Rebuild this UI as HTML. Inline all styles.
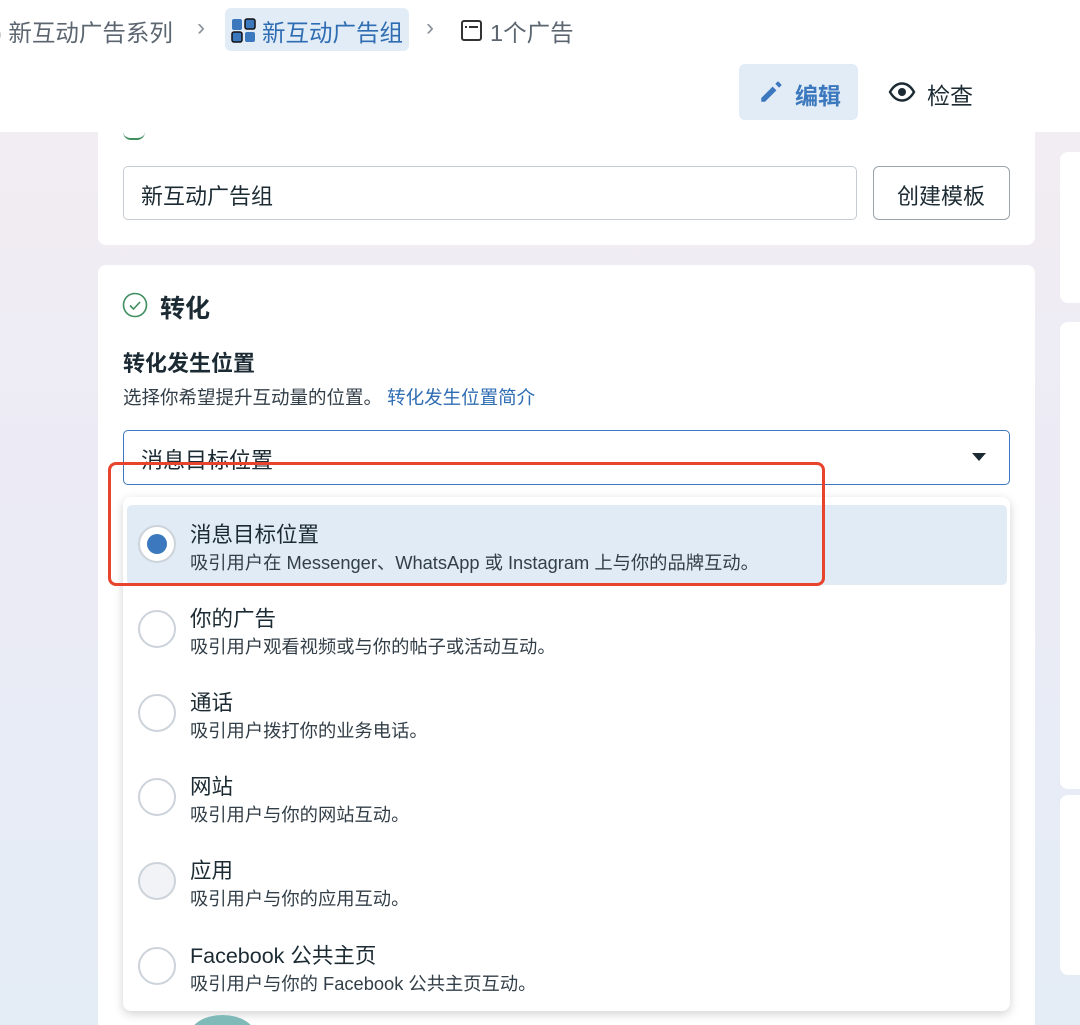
<!DOCTYPE html>
<html><head><meta charset="utf-8"><style>
*{margin:0;padding:0;box-sizing:border-box}
html{width:1080px;height:1025px;overflow:hidden;background:#e4ecf6}
body{width:1080px;height:1025px;overflow:hidden;position:relative;font-family:"Liberation Sans","Noto Sans CJK SC",sans-serif;color:#1c2b33;background:linear-gradient(180deg,#f4eef0 0%,#ecebf5 45%,#e4ecf6 100%)}
.a{position:absolute}
.top{left:0;top:0;width:1080px;height:132px;background:#fff}
.card{background:#fff;border-radius:8px}
.t{position:absolute;white-space:nowrap}
.radio{position:absolute;left:138px;width:38px;height:38px;border-radius:50%;border:2px solid #ccd3da;background:#fff}
.ti{font-size:21.5px}
.su{font-size:18.3px;color:#333f48}
</style></head><body>
<div class="a top"></div>
<div class="t" style="left:-6px;top:14px;font-size:23.5px;color:#5c6670">) 新互动广告系列</div>
<div class="t" style="left:197px;top:14px;font-size:24px;color:#8a939b">›</div>
<div class="a" style="left:225px;top:8px;width:184px;height:43px;background:#e1ecf7;border-radius:6px"></div>
<svg class="a" style="left:231px;top:18px" width="26" height="26" viewBox="0 0 26 26"><rect x="1" y="1" width="10" height="11" rx="2" fill="#3b78be"/><rect x="14" y="1" width="10" height="10" rx="2" fill="#3b78be" stroke="#111" stroke-width="1.5"/><rect x="1" y="14" width="10" height="10" rx="2" fill="#3b78be" stroke="#111" stroke-width="1.5"/><rect x="14" y="14" width="10" height="10" rx="2" fill="#3b78be"/></svg>
<div class="t" style="left:262px;top:14px;font-size:23.5px;color:#2f6db3">新互动广告组</div>
<div class="t" style="left:426px;top:14px;font-size:24px;color:#8a939b">›</div>
<div class="a" style="left:461px;top:20px;width:21px;height:21px;border:2px solid #333;border-radius:3px"></div>
<div class="a" style="left:465px;top:26px;width:2px;height:2px;background:#333"></div>
<div class="a" style="left:469px;top:26px;width:9px;height:2px;background:#333"></div>
<div class="t" style="left:490px;top:14px;font-size:23.5px;color:#5c6670">1个广告</div>
<div class="a" style="left:739px;top:64px;width:119px;height:56px;background:#e1ecf7;border-radius:6px"></div>
<svg class="a" style="left:758px;top:79px" width="26" height="26" viewBox="0 0 24 24"><path d="M3 17.5V21h3.5L17 10.5 13.5 7z M19.5 8 16 4.5l1.8-1.8a1 1 0 0 1 1.4 0l2.1 2.1a1 1 0 0 1 0 1.4z" fill="#3b78be"/></svg>
<div class="t" style="left:795px;top:77px;font-size:23px;font-weight:bold;color:#3b78be">编辑</div>
<svg class="a" style="left:888px;top:81px" width="28" height="22" viewBox="0 0 28 22"><path d="M2 11C6 4 10 2.5 14 2.5S22 4 26 11C22 18 18 19.5 14 19.5S6 18 2 11z" fill="none" stroke="#1c2b33" stroke-width="2.4"/><circle cx="14" cy="11" r="4" fill="#1c2b33"/></svg>
<div class="t" style="left:927px;top:77px;font-size:23px;color:#1c2b33">检查</div>

<div class="a card" style="left:98px;top:132px;width:937px;height:113px;border-radius:0 0 8px 8px"></div>
<div class="a" style="left:123px;top:132px;width:22px;height:8px;border-bottom:2px solid #3e8e5e;border-radius:0 0 12px 12px"></div>
<div class="a" style="left:123px;top:166px;width:734px;height:54px;border:1px solid #c6ccd2;border-radius:5px"></div>
<div class="t" style="left:141px;top:179px;font-size:22px">新互动广告组</div>
<div class="a" style="left:873px;top:166px;width:137px;height:54px;border:1px solid #9aa3ab;border-radius:6px"></div>
<div class="t" style="left:897px;top:179px;font-size:22px">创建模板</div>

<div class="a card" style="left:98px;top:265px;width:937px;height:780px"></div>
<div class="a card" style="left:1060px;top:152px;width:40px;height:151px"></div>
<div class="a card" style="left:1060px;top:322px;width:40px;height:467px"></div>
<div class="a card" style="left:1060px;top:795px;width:40px;height:180px"></div>

<svg class="a" style="left:122px;top:292px" width="26" height="26" viewBox="0 0 26 26"><circle cx="13" cy="13" r="11.5" fill="none" stroke="#3e8e5e" stroke-width="1.6"/><path d="M8 13.5l3.5 3.5 6.5-7" fill="none" stroke="#3e8e5e" stroke-width="1.6"/></svg>
<div class="t" style="left:160px;top:289px;font-size:25px;font-weight:bold">转化</div>
<div class="t" style="left:123px;top:346px;font-size:22px;font-weight:bold">转化发生位置</div>
<div class="t" style="left:123px;top:384px;font-size:18.5px;color:#333f48">选择你希望提升互动量的位置。 <span style="color:#2f6db3">转化发生位置简介</span></div>
<div class="a" style="left:123px;top:430px;width:887px;height:55px;border:1.5px solid #3b78be;border-radius:5px"></div>
<div class="t" style="left:141px;top:443px;font-size:22px">消息目标位置</div>
<div class="a" style="left:972px;top:453px;border-left:7px solid transparent;border-right:7px solid transparent;border-top:8px solid #1c2b33"></div>

<div class="a" style="left:123px;top:497px;width:887px;height:514px;background:#fff;border-radius:8px;box-shadow:0 3px 10px rgba(0,0,0,.18)"></div>
<div class="a" style="left:127px;top:505px;width:880px;height:80px;background:#e1ebf5;border-radius:5px"></div>

<div class="radio" style="top:525px"></div><div class="a" style="left:147px;top:534px;width:20px;height:20px;border-radius:50%;background:#3b78be"></div>
<div class="t ti" style="left:190px;top:518px">消息目标位置</div>
<div class="t su" style="left:190px;top:549px">吸引用户在 Messenger、WhatsApp 或 Instagram 上与你的品牌互动。</div>

<div class="radio" style="top:610px"></div>
<div class="t ti" style="left:190px;top:602px">你的广告</div>
<div class="t su" style="left:190px;top:633px">吸引用户观看视频或与你的帖子或活动互动。</div>

<div class="radio" style="top:694px"></div>
<div class="t ti" style="left:190px;top:686px">通话</div>
<div class="t su" style="left:190px;top:717px">吸引用户拨打你的业务电话。</div>

<div class="radio" style="top:778px"></div>
<div class="t ti" style="left:190px;top:770px">网站</div>
<div class="t su" style="left:190px;top:801px">吸引用户与你的网站互动。</div>

<div class="radio" style="top:862px;background:#f1f3f6"></div>
<div class="t ti" style="left:190px;top:854px">应用</div>
<div class="t su" style="left:190px;top:885px">吸引用户与你的应用互动。</div>

<div class="radio" style="top:947px"></div>
<div class="t ti" style="left:190px;top:939px">Facebook 公共主页</div>
<div class="t su" style="left:190px;top:970px">吸引用户与你的 Facebook 公共主页互动。</div>

<div class="a" style="left:190px;top:1015px;width:65px;height:40px;border-radius:50%;background:#7fb9b8"></div>
<div class="a" style="left:108px;top:462px;width:717px;height:124px;border:3px solid #e8432d;border-radius:8px"></div>
</body></html>
